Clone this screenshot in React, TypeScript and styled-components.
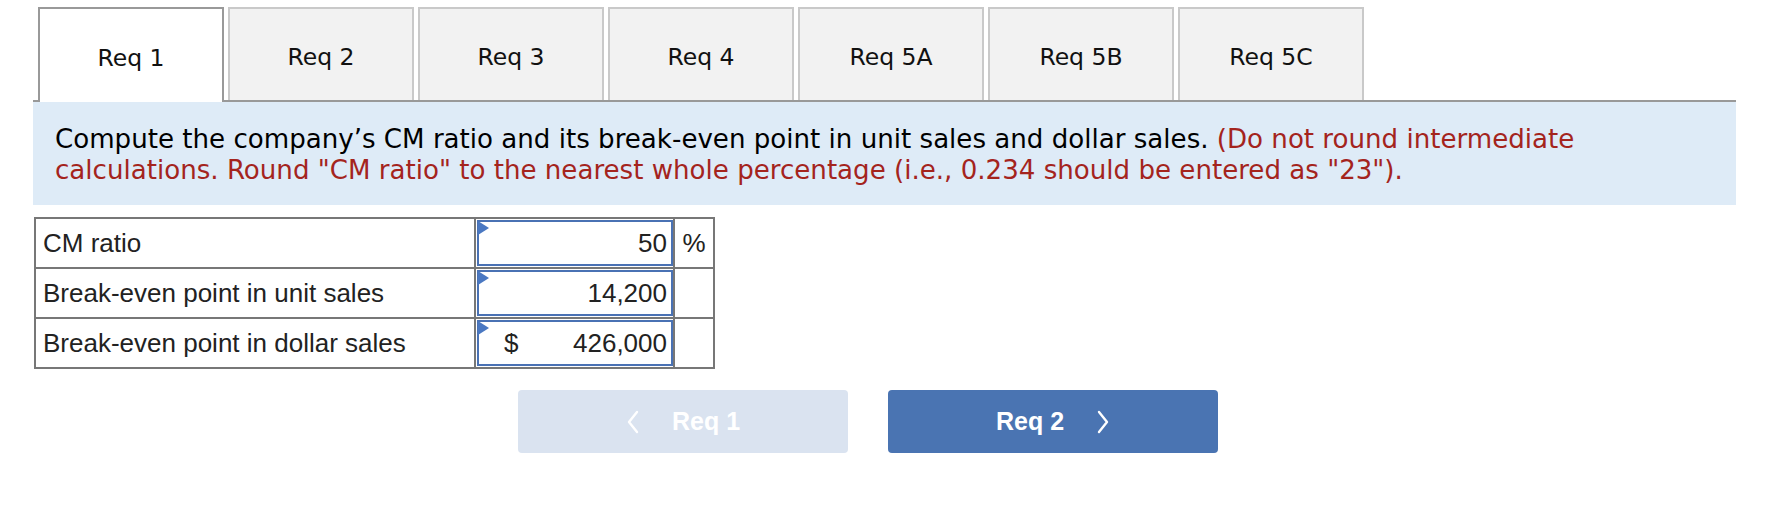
import styled, { createGlobalStyle } from "styled-components";

const GlobalStyle = createGlobalStyle`
  html, body {
    margin: 0;
    padding: 0;
    background: #ffffff;
  }
  body {
    font-family: "DejaVu Sans", Verdana, sans-serif;
    color: #000;
  }
`;

const tabs = ["Req 1", "Req 2", "Req 3", "Req 4", "Req 5A", "Req 5B", "Req 5C"];

const rows = [
  { label: "CM ratio", value: "50", prefix: "", unit: "%" },
  { label: "Break-even point in unit sales", value: "14,200", prefix: "", unit: "" },
  { label: "Break-even point in dollar sales", value: "426,000", prefix: "$", unit: "" },
];

const Chevron = ({ dir }: { dir: "left" | "right" }) => (
  <svg width="14" height="24" viewBox="0 0 14 24" fill="none">
    <polyline
      points={dir === "left" ? "11,2 3,12 11,22" : "3,2 11,12 3,22"}
      stroke="#ffffff"
      strokeWidth="2.4"
      strokeLinecap="round"
      strokeLinejoin="round"
    />
  </svg>
);

const App = () => (
  <Page>
    <GlobalStyle />
    <TabBar>
      {tabs.map((t, i) => (
        <Tab key={t} $active={i === 0}>
          {t}
        </Tab>
      ))}
    </TabBar>

    <Banner>
      Compute the company’s CM ratio and its break-even point in unit sales and dollar sales.{" "}
      <Hint>
        (Do not round intermediate calculations. Round "CM ratio" to the nearest whole percentage
        (i.e., 0.234 should be entered as "23").
      </Hint>
    </Banner>

    <AnswerTable>
      <tbody>
        {rows.map((r) => (
          <tr key={r.label}>
            <LabelCell>{r.label}</LabelCell>
            <InputCell>
              <InputBox>
                <Flag />
                <Prefix>{r.prefix}</Prefix>
                <Value>{r.value}</Value>
              </InputBox>
            </InputCell>
            <UnitCell>{r.unit}</UnitCell>
          </tr>
        ))}
      </tbody>
    </AnswerTable>

    <NavRow>
      <NavButton $disabled>
        <Chevron dir="left" />
        <span>Req 1</span>
      </NavButton>
      <NavButton>
        <span>Req 2</span>
        <Chevron dir="right" />
      </NavButton>
    </NavRow>
  </Page>
);

export default App;

const Page = styled.div`
  width: 1703px;
  padding: 7px 0 0 33px;
  height: 503px;
`;

const TabBar = styled.div`
  display: flex;
  align-items: flex-end;
  gap: 4px;
  height: 93px;
  padding-left: 5px;
  border-bottom: 2px solid #999999;
`;

const Tab = styled.div<{ $active?: boolean }>`
  box-sizing: border-box;
  width: 186px;
  height: ${(p) => (p.$active ? "95px" : "93px")};
  margin-bottom: ${(p) => (p.$active ? "-2px" : "0")};
  position: relative;
  z-index: ${(p) => (p.$active ? 1 : 0)};
  display: flex;
  align-items: center;
  justify-content: center;
  padding-top: 4px;
  border: 2px solid ${(p) => (p.$active ? "#999999" : "#c9c9c9")};
  border-bottom: none;
  background: ${(p) => (p.$active ? "#ffffff" : "#f2f2f2")};
  font-size: 23.5px;
  color: #111;
`;

const Banner = styled.div`
  background: #deebf7;
  padding: 22px 20px 19px 22px;
  font-size: 26.1px;
  line-height: 31px;
  color: #000;
`;

const Hint = styled.span`
  color: #a4241d;
`;

const AnswerTable = styled.table`
  margin: 12px 0 0 1px;
  border-collapse: collapse;
  font-family: "Liberation Sans", Arial, sans-serif;
  font-size: 26px;
  color: #222;

  td {
    border: 2px solid #777777;
    height: 46px;
    padding: 0;
  }
`;

const LabelCell = styled.td`
  width: 431px;
  padding-left: 7px !important;
`;

const InputCell = styled.td`
  width: 196px;
  padding: 1px 0 1px 1px !important;
`;

const InputBox = styled.div`
  position: relative;
  box-sizing: border-box;
  height: 46px;
  display: flex;
  align-items: center;
  border: 2px solid #4a72b4;
  padding: 0 4px 0 25px;
`;

const Flag = styled.div`
  position: absolute;
  top: -1px;
  left: -1px;
  width: 0;
  height: 0;
  border-top: 7px solid transparent;
  border-bottom: 7px solid transparent;
  border-left: 11px solid #4a78c2;
`;

const Prefix = styled.span`
  width: 30px;
`;

const Value = styled.span`
  flex: 1;
  text-align: right;
`;

const UnitCell = styled.td`
  width: 38px;
  text-align: center;
`;

const NavRow = styled.div`
  display: flex;
  gap: 40px;
  margin-top: 21px;
  padding-left: 485px;
`;

const NavButton = styled.div<{ $disabled?: boolean }>`
  width: 330px;
  height: 63px;
  border-radius: 4px;
  display: flex;
  align-items: center;
  justify-content: center;
  gap: 32px;
  background: ${(p) => (p.$disabled ? "#dae3f0" : "#4a74b2")};
  color: #ffffff;
  font-family: "Liberation Sans", Arial, sans-serif;
  font-weight: bold;
  font-size: 25px;
`;
